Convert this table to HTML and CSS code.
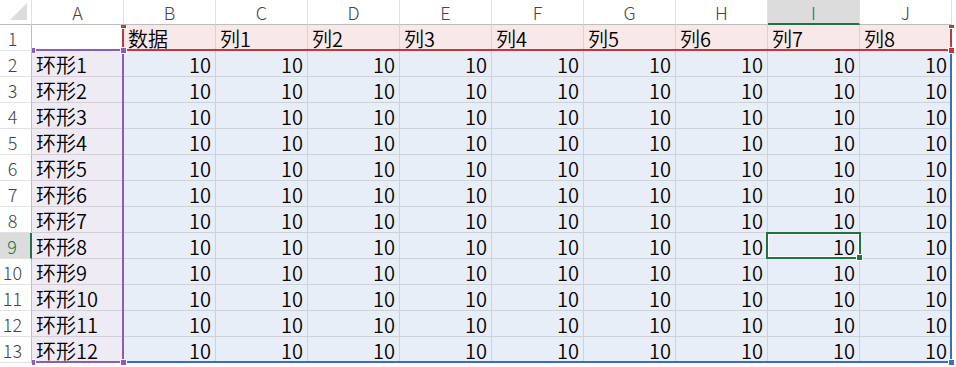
FILE: index.html
```html
<!DOCTYPE html>
<html>
<head>
<meta charset="utf-8">
<link rel="stylesheet" href="styles.css">
</head>
<body>
<div class="sheet">
  <div class="grid">
    <div class="corner"><svg width="31" height="24" viewBox="0 0 31 24"><polygon points="27,3 27,20 10,20" fill="#dcdcdc"/></svg></div>
    <div class="ch">A</div><div class="ch">B</div><div class="ch">C</div><div class="ch">D</div><div class="ch">E</div><div class="ch">F</div><div class="ch">G</div><div class="ch">H</div><div class="ch sel">I</div><div class="ch">J</div>

    <div class="rh">1</div><div class="c"></div><div class="c p">数据</div><div class="c p">列1</div><div class="c p">列2</div><div class="c p">列3</div><div class="c p">列4</div><div class="c p">列5</div><div class="c p">列6</div><div class="c p">列7</div><div class="c p">列8</div>

    <div class="rh">2</div><div class="c l">环形1</div><div class="c b">10</div><div class="c b">10</div><div class="c b">10</div><div class="c b">10</div><div class="c b">10</div><div class="c b">10</div><div class="c b">10</div><div class="c b">10</div><div class="c b">10</div>
    <div class="rh">3</div><div class="c l">环形2</div><div class="c b">10</div><div class="c b">10</div><div class="c b">10</div><div class="c b">10</div><div class="c b">10</div><div class="c b">10</div><div class="c b">10</div><div class="c b">10</div><div class="c b">10</div>
    <div class="rh">4</div><div class="c l">环形3</div><div class="c b">10</div><div class="c b">10</div><div class="c b">10</div><div class="c b">10</div><div class="c b">10</div><div class="c b">10</div><div class="c b">10</div><div class="c b">10</div><div class="c b">10</div>
    <div class="rh">5</div><div class="c l">环形4</div><div class="c b">10</div><div class="c b">10</div><div class="c b">10</div><div class="c b">10</div><div class="c b">10</div><div class="c b">10</div><div class="c b">10</div><div class="c b">10</div><div class="c b">10</div>
    <div class="rh">6</div><div class="c l">环形5</div><div class="c b">10</div><div class="c b">10</div><div class="c b">10</div><div class="c b">10</div><div class="c b">10</div><div class="c b">10</div><div class="c b">10</div><div class="c b">10</div><div class="c b">10</div>
    <div class="rh">7</div><div class="c l">环形6</div><div class="c b">10</div><div class="c b">10</div><div class="c b">10</div><div class="c b">10</div><div class="c b">10</div><div class="c b">10</div><div class="c b">10</div><div class="c b">10</div><div class="c b">10</div>
    <div class="rh">8</div><div class="c l">环形7</div><div class="c b">10</div><div class="c b">10</div><div class="c b">10</div><div class="c b">10</div><div class="c b">10</div><div class="c b">10</div><div class="c b">10</div><div class="c b">10</div><div class="c b">10</div>
    <div class="rh sel">9</div><div class="c l">环形8</div><div class="c b">10</div><div class="c b">10</div><div class="c b">10</div><div class="c b">10</div><div class="c b">10</div><div class="c b">10</div><div class="c b">10</div><div class="c b">10</div><div class="c b">10</div>
    <div class="rh">10</div><div class="c l">环形9</div><div class="c b">10</div><div class="c b">10</div><div class="c b">10</div><div class="c b">10</div><div class="c b">10</div><div class="c b">10</div><div class="c b">10</div><div class="c b">10</div><div class="c b">10</div>
    <div class="rh">11</div><div class="c l">环形10</div><div class="c b">10</div><div class="c b">10</div><div class="c b">10</div><div class="c b">10</div><div class="c b">10</div><div class="c b">10</div><div class="c b">10</div><div class="c b">10</div><div class="c b">10</div>
    <div class="rh">12</div><div class="c l">环形11</div><div class="c b">10</div><div class="c b">10</div><div class="c b">10</div><div class="c b">10</div><div class="c b">10</div><div class="c b">10</div><div class="c b">10</div><div class="c b">10</div><div class="c b">10</div>
    <div class="rh">13</div><div class="c l">环形12</div><div class="c b">10</div><div class="c b">10</div><div class="c b">10</div><div class="c b">10</div><div class="c b">10</div><div class="c b">10</div><div class="c b">10</div><div class="c b">10</div><div class="c b">10</div>
  </div>

  <div class="rng rng-red"></div>
  <div class="rng rng-purple"></div>
  <div class="rng rng-blue"></div>
  <div class="active"></div>

  <div class="hd hd-red hd-r1"></div>
  <div class="hd hd-red hd-r2"></div>
  <div class="hd hd-red hd-r3"></div>
  <div class="hd hd-purple hd-p1"></div>
  <div class="hd hd-purple hd-p2"></div>
  <div class="hd hd-purple hd-p3"></div>
  <div class="hd hd-purple hd-p4"></div>
  <div class="hd hd-blue hd-b1"></div>
  <div class="hd hd-green hd-g1"></div>
</div>
</body>
</html>
```

FILE: styles.css
```css
html, body {
  margin: 0;
  padding: 0;
  background: #ffffff;
}

.sheet {
  position: relative;
  width: 956px;
  height: 367px;
  overflow: hidden;
  font-family: "Noto Sans CJK SC", "Noto Sans", sans-serif;
  font-weight: 350;
  color: #000;
}

.grid {
  display: grid;
  grid-template-columns: 32px repeat(10, 92px);
  grid-template-rows: 25px repeat(13, 26px);
}

.grid > div {
  box-sizing: border-box;
  white-space: nowrap;
}

.corner {
  border-right: 1px solid #e0e0e0;
  border-bottom: 1px solid #bdbdbd;
  background: #fff;
}

.corner svg {
  display: block;
}

.ch {
  border-right: 1px solid #e1e1e1;
  border-bottom: 1px solid #bdbdbd;
  background: #fff;
  text-align: center;
  font-size: 18px;
  font-weight: 300;
  line-height: 24px;
  color: #444;
}

.ch.sel {
  background: #dcdcdc;
  border-bottom: 2px solid #217346;
  color: #217346;
}

.rh {
  border-right: 1px solid #bdbdbd;
  border-bottom: 1px solid #e1e1e1;
  background: #fff;
  text-align: center;
  padding-right: 6px;
  padding-top: 1px;
  font-size: 18px;
  font-weight: 300;
  line-height: 25px;
  color: #444;
}

.rh.sel {
  background: #dcdcdc;
  border-right: 2px solid #217346;
  color: #217346;
}

.c {
  border-right: 1px solid #d4d4d4;
  border-bottom: 1px solid #d4d4d4;
  padding: 1px 4px 0 4px;
  font-size: 20px;
  line-height: 25px;
}

.c.p {
  background: #f9e8e8;
  text-align: left;
}

.c.l {
  background: #efebf5;
  text-align: left;
  border-bottom-color: #d2cfd8;
}

.c.b {
  background: #e8eef8;
  text-align: right;
  border-right-color: #cdd1d8;
  border-bottom-color: #cdd1d8;
}

/* range highlight overlays */
.rng {
  position: absolute;
  box-sizing: border-box;
  pointer-events: none;
}

.rng-red {
  left: 122px;
  top: 25px;
  width: 830px;
  height: 26px;
  border-left: 2px solid #c4363f;
  border-right: 2px solid #c4363f;
  border-bottom: 2px solid #c4363f;
}

.rng-purple {
  left: 32px;
  top: 49px;
  width: 92px;
  height: 314px;
  border-top: 2px solid #8a5cbb;
  border-right: 2px solid #8a5cbb;
  border-bottom: 2px solid #8a5cbb;
}

.rng-blue {
  left: 124px;
  top: 51px;
  width: 828px;
  height: 312px;
  border-right: 2px solid #3a6dc3;
  border-bottom: 2px solid #3a6dc3;
}

.active {
  position: absolute;
  box-sizing: border-box;
  left: 766px;
  top: 232px;
  width: 95px;
  height: 27px;
  border: 2px solid #217346;
  box-shadow: inset 0 0 0 1px #ffffff;
}

/* handles */
.hd {
  position: absolute;
  box-sizing: border-box;
  width: 7px;
  height: 7px;
  border: 1px solid #ffffff;
}

.hd-red { background: #c4363f; }
.hd-purple { background: #8a5cbb; }
.hd-blue { background: #3a6dc3; }
.hd-green { background: #217346; }

.hd-r1 { left: 120px; top: 22px; clip-path: inset(3px 0 0 0); }
.hd-r2 { left: 948px; top: 22px; clip-path: inset(3px 0 0 0); }
.hd-r3 { left: 948px; top: 47px; }

.hd-p1 { left: 29px; top: 47px; clip-path: inset(0 0 0 3px); }
.hd-p2 { left: 120px; top: 47px; }
.hd-p3 { left: 29px; top: 359px; clip-path: inset(0 0 0 3px); }
.hd-p4 { left: 120px; top: 359px; }

.hd-b1 { left: 948px; top: 359px; }

.hd-g1 { left: 856px; top: 254px; }
```
